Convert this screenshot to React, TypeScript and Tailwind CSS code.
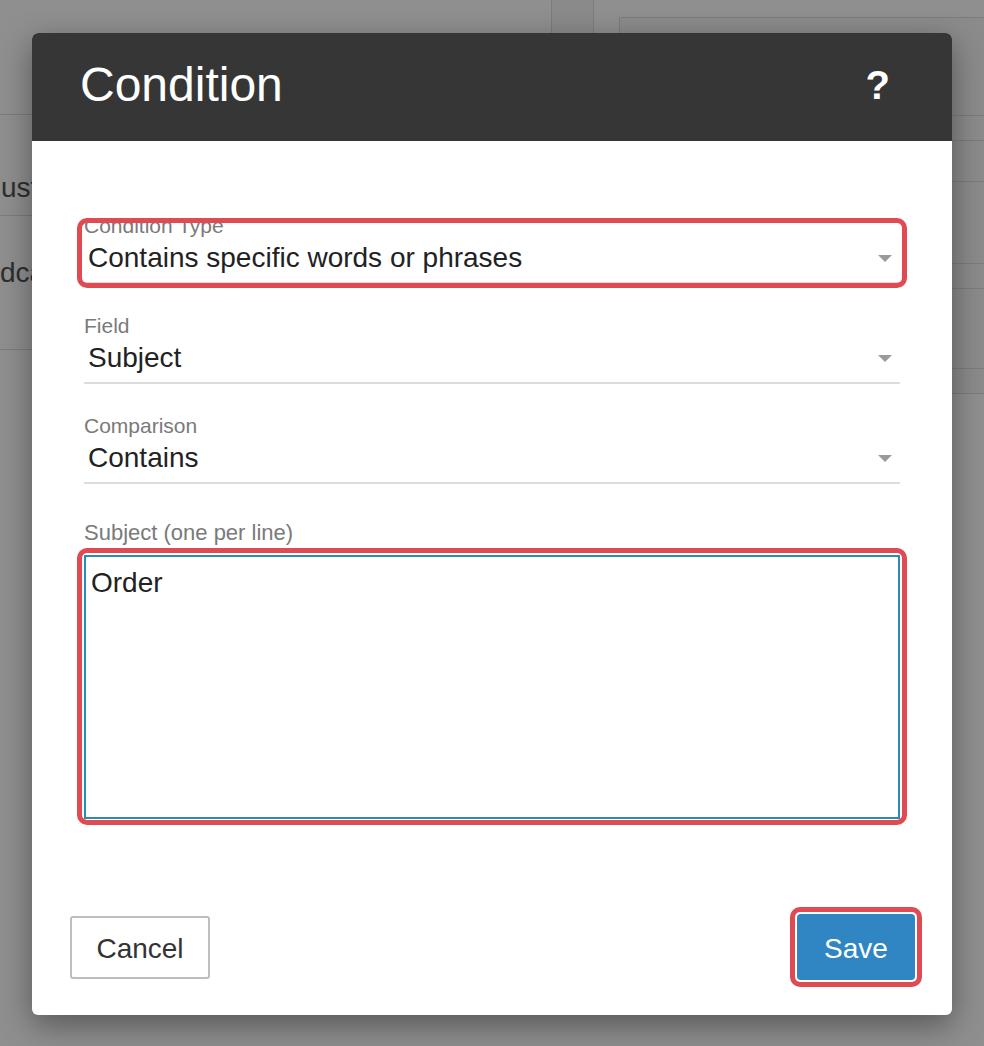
import React from 'react'

const font = { fontFamily: '"Liberation Sans", Arial, sans-serif' }

function Caret() {
  return <span className="h-0 w-0 border-l-[7px] border-r-[7px] border-t-[7px] border-l-transparent border-r-transparent border-t-[#9a9a9a]" />
}

interface SelectFieldProps {
  label: string
  value: string
  highlight?: boolean
}

function SelectField({ label, value, highlight }: SelectFieldProps) {
  return (
    <div className="relative border-b-2 border-[#dcdcdc] pb-[6px]">
      <div className="text-[21px] leading-[24px] text-[#7a7a7a]">{label}</div>
      <div className="flex h-[38px] items-center justify-between pl-[4px] pr-[8px] pt-[2px]">
        <span className="text-[28px] leading-[36px] text-[#222]">{value}</span>
        <Caret />
      </div>
      {/* annotation ring */}
      {highlight && (
        <div className="pointer-events-none absolute -left-[7px] -right-[7px] top-[4px] -bottom-[6px] rounded-[10px] border-[5px] border-[#e04a52]" />
      )}
    </div>
  )
}

export default function App() {
  return (
    <div className="relative h-[1046px] w-[984px] overflow-hidden bg-[#8f8f8f]" style={font}>
      {/* page behind the overlay */}
      <div className="flex items-start">
        <div className="w-[552px]">
          <div className="h-[115px] border-b border-r border-[#7c7c7c]" />
          <div className="h-[101px] border-b border-[#7c7c7c] pt-[55px] pl-[1px]">
            <span className="text-[28px] leading-[36px] text-[#2e2e2e]">ustomer</span>
          </div>
          <div className="h-[134px] border-b border-[#7c7c7c] pt-[39px]">
            <span className="text-[28px] leading-[36px] text-[#2e2e2e]">dcast</span>
          </div>
        </div>
        <div className="h-[115px] w-[42px] border-r border-[#7c7c7c] bg-[#8a8a8a]" />
        <div className="flex-1 pl-[25px] pt-[17px]">
          <div className="border-l border-t border-[#7c7c7c] bg-[#8b8b8b]">
            <div className="h-[98px] border-b border-[#7c7c7c]" />
            <div className="h-[25px] border-b border-[#7c7c7c]" />
            <div className="h-[41px] border-b border-[#7c7c7c]" />
            <div className="h-[82px] border-b border-[#7c7c7c]" />
            <div className="h-[25px] border-b border-[#7c7c7c]" />
            <div className="h-[80px] border-b border-[#7c7c7c]" />
            <div className="h-[25px] border-b border-[#7c7c7c]" />
          </div>
        </div>
      </div>

      {/* modal */}
      <div className="absolute inset-0 flex justify-center pt-[33px]">
        <div className="flex h-[982px] w-[920px] flex-col rounded-[6px] bg-white shadow-[0_10px_32px_rgba(0,0,0,0.4)]">
          <div className="flex h-[108px] items-center justify-between rounded-t-[6px] bg-[#363636] pb-[4px] pl-[48px] pr-[62px]">
            <h1 className="text-[48px] leading-[56px] text-white">Condition</h1>
            <span className="text-[40px] font-bold leading-[48px] text-white">?</span>
          </div>

          <div className="flex flex-1 flex-col gap-[30px] px-[52px] pt-[73px]">
            <SelectField label="Condition Type" value="Contains specific words or phrases" highlight />
            <SelectField label="Field" value="Subject" />
            <SelectField label="Comparison" value="Contains" />
            <div className="mt-[7px]">
              <div className="text-[22px] leading-[24px] text-[#7a7a7a]">Subject (one per line)</div>
              <div className="relative mt-[10px]">
                <textarea
                  defaultValue="Order"
                  className="block h-[264px] w-full resize-none border-2 border-[#2a8ab8] pl-[5px] pt-[8px] text-[28px] leading-[36px] text-[#222] outline-none"
                  style={font}
                />
                <div className="pointer-events-none absolute -left-[7px] -right-[7px] -top-[7px] -bottom-[6px] rounded-[10px] border-[5px] border-[#e04a52]" />
              </div>
            </div>
          </div>

          <div className="flex items-center justify-between pb-[28px] pl-[38px] pr-[30px]">
            <button className="h-[63px] w-[140px] rounded-[3px] border-2 border-[#bdbdbd] bg-white pt-[4px] text-[28px] text-[#333]">
              Cancel
            </button>
            <div className="rounded-[10px] border-[5px] border-[#e04a52] p-[2px]">
              <button className="h-[66px] w-[118px] rounded-[4px] bg-[#2f86c2] pt-[4px] text-[28px] text-white">Save</button>
            </div>
          </div>
        </div>
      </div>
    </div>
  )
}
